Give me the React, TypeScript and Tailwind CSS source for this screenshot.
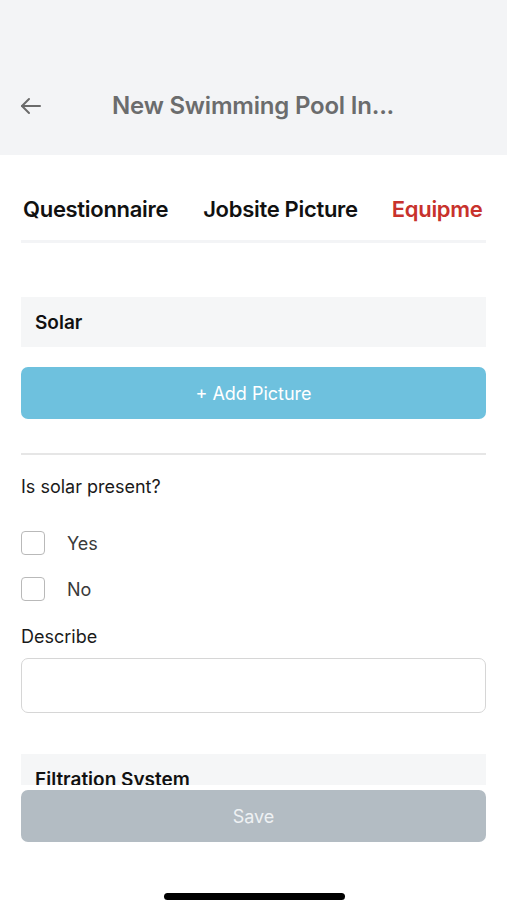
import React from "react";

function Checkbox({ label }: { label: string }) {
  return (
    <div className="flex items-center h-[24px]">
      <div className="w-[24px] h-[24px] rounded-[4px] border-[1.5px] border-[#b9b9b9] bg-white" />
      <span className="ml-[22px] text-[18px] text-[#3a3a3a]">{label}</span>
    </div>
  );
}

export default function App() {
  return (
    <div
      className="relative w-[507px] h-[900px] overflow-hidden bg-white"
      style={{ fontFamily: "Inter, 'Liberation Sans', sans-serif" }}
    >
      {/* Header */}
      <div className="h-[155px] bg-[#f3f4f6] flex flex-col">
        <div className="mt-[84px] h-[44px] flex items-center">
          <svg
            className="ml-[19px]"
            width="24"
            height="24"
            viewBox="0 0 24 24"
            fill="none"
            stroke="#6b6b6b"
            strokeWidth="2"
            strokeLinecap="round"
            strokeLinejoin="round"
          >
            <path d="M21 12H3" />
            <path d="M10 5l-7 7 7 7" />
          </svg>
          <span className="ml-[69px] text-[24px] font-semibold text-[#6b6c6d] tracking-[-0.2px]">
            New Swimming Pool In...
          </span>
        </div>
      </div>

      {/* Tabs */}
      <div className="pt-[41px] px-[21px]">
        <div className="flex h-[26px] items-center whitespace-nowrap overflow-hidden text-[22px] font-semibold tracking-[-0.3px]">
          <span className="ml-[2px] text-[#111]">Questionnaire</span>
          <span className="ml-[35px] text-[#111]">Jobsite Picture</span>
          <span className="ml-[34px] text-[#c8322c]">Equipme</span>
        </div>
        <div className="mt-[18px] h-[3px] bg-[#f3f4f6]" />
      </div>

      {/* Content */}
      <div className="px-[21px]">
        <div className="mt-[54px] h-[50px] bg-[#f5f6f7] flex items-center px-[14px]">
          <span className="text-[19px] font-semibold text-[#111] translate-y-[1px]">Solar</span>
        </div>
        <div className="mt-[20px] h-[52px] rounded-[7px] bg-[#6ec1de] flex items-center justify-center">
          <span className="text-[18px] text-white">+ Add Picture</span>
        </div>
        <div className="mt-[34px] h-[2px] bg-[#e6e6e6]" />
        <div className="mt-[21px] text-[18px] text-[#1a1a1a] leading-[22px]">Is solar present?</div>
        <div className="mt-[33px]">
          <Checkbox label="Yes" />
        </div>
        <div className="mt-[22px]">
          <Checkbox label="No" />
        </div>
        <div className="mt-[25px] text-[18px] text-[#1a1a1a] leading-[22px]">Describe</div>
        <div className="mt-[10px] h-[55px] rounded-[7px] border border-[#d6d6d6] bg-white" />
        <div className="mt-[41px] h-[36px] bg-[#f5f6f7] flex items-end px-[14px]">
          <span className="text-[19px] font-semibold text-[#111] leading-[22px] translate-y-[1px]">
            Filtration System
          </span>
        </div>
      </div>

      {/* Save button overlay */}
      <div className="absolute left-0 right-0 top-[785px] h-[115px] bg-white px-[21px] pt-[5px]">
        <div className="h-[52px] rounded-[7px] bg-[#b3bcc3] flex items-center justify-center">
          <span className="text-[18px] text-[#eef1f3]">Save</span>
        </div>
      </div>

      {/* Home indicator */}
      <div className="absolute left-[164px] top-[893px] w-[181px] h-[7px] rounded-full bg-black" />
    </div>
  );
}
